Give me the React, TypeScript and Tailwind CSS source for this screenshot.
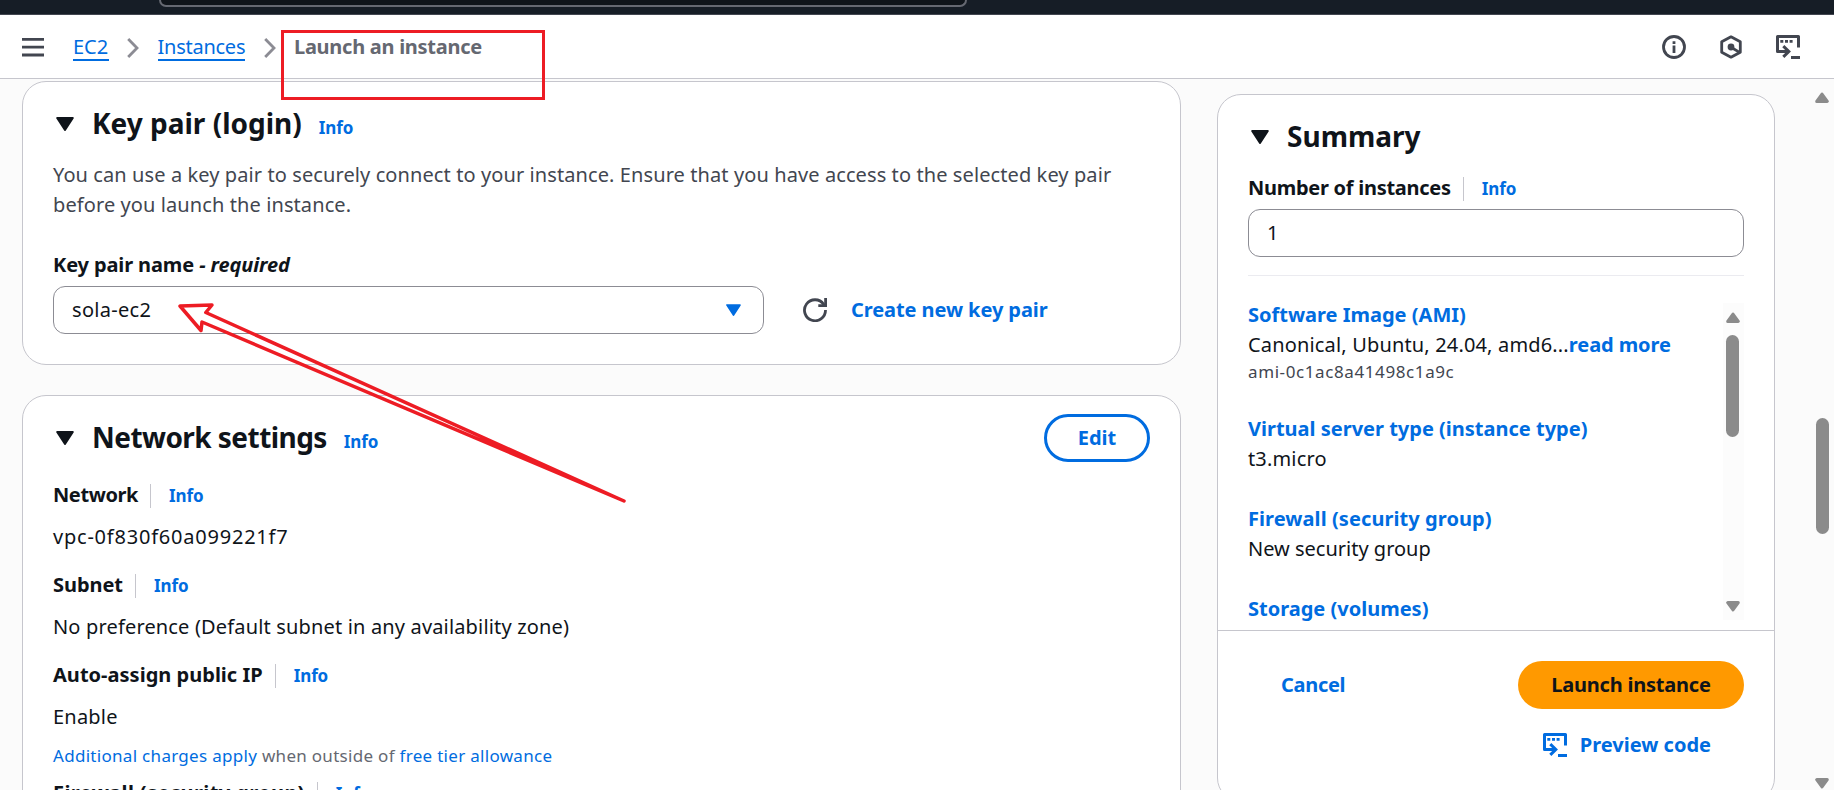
import type { ReactNode } from "react";

function Caret({ className }: { className: string }) {
  return (
    <svg viewBox="0 0 18 14" className={className} fill="currentColor" stroke="currentColor" strokeWidth="2" strokeLinejoin="round">
      <path d="M1.2 1H16.8L9 13Z" />
    </svg>
  );
}

function ScrollArrow({ down = false }: { down?: boolean }) {
  return (
    <svg viewBox="0 0 14 11" className={down ? "h-[11px] w-[14px] rotate-180 text-[#8b8b8b]" : "h-[11px] w-[14px] text-[#8b8b8b]"} fill="currentColor" stroke="currentColor" strokeWidth="3" strokeLinejoin="round">
      <path d="M7 2L12.3 9.4H1.7Z" />
    </svg>
  );
}

function Chevron() {
  return (
    <svg viewBox="0 0 12 20" className="h-5 w-3 shrink-0" fill="none" stroke="#8c8c94" strokeWidth="2.8">
      <path d="M1.2 1L10 10L1.2 19" />
    </svg>
  );
}

function ShellIcon({ className }: { className: string }) {
  return (
    <svg viewBox="0 0 24 24" className={className} fill="none" stroke="currentColor" strokeWidth="3">
      <path d="M22.5 12.5V1.5H1.5V16.5H12" strokeLinejoin="round" />
      <path d="M7.3 11.2L12.8 16.5L7.3 21.8" />
      <path d="M15 22.5H24" />
      <path d="M4.3 6.3H7.3M9 6.3H12M13.6 6.3H16.6" strokeWidth="2.8" />
    </svg>
  );
}

function InfoLink() {
  return <a className="text-[17px] leading-[32px] font-bold tracking-[-0.1px] text-[#006ce0]">Info</a>;
}

function Labelled({ children }: { children: ReactNode }) {
  return (
    <div className="flex h-[30px] items-start">
      {children}
      <span className="mt-1 mr-[18px] ml-3 h-6 w-px bg-[#c6c6cd]" />
      <InfoLink />
    </div>
  );
}

export default function App() {
  return (
    <div className="relative flex h-[790px] w-[1834px] flex-col overflow-hidden bg-[#fbfbfb] font-['Noto_Sans',sans-serif] text-[20px] leading-[30px] whitespace-nowrap text-[#0f141a]">
      <div className="flex h-[15px] shrink-0 items-start border-b border-[#424650] bg-[#161d26] pl-[159px]">
        <div className="h-[7px] w-[808px] rounded-b-[10px] border-2 border-t-0 border-[#656871] bg-[#0f141a]" />
      </div>

      <header className="flex h-16 shrink-0 items-start border-b border-[#c6c6cd] bg-white pt-4 pr-[34px] pl-[22px]">
        <svg viewBox="0 0 22 20" className="mt-[6px] h-5 w-[22px]" stroke="#424650" strokeWidth="2.8">
          <path d="M0 2.4H22M0 10.2H22M0 18H22" />
        </svg>
        <nav className="ml-[29px] flex items-start">
          <a className="h-[30px] w-9 border-b-2 border-[#006ce0] pt-px text-[#006ce0]">EC2</a>
          <span className="mt-[7px] ml-[18px] flex"><Chevron /></span>
          <a className="ml-[18.5px] h-[30px] w-[87.5px] border-b-2 border-[#006ce0] pt-px tracking-[-0.25px] text-[#006ce0]">Instances</a>
          <span className="mt-[7px] ml-[19px] flex"><Chevron /></span>
          <span className="ml-[18px] pt-px font-bold tracking-[-0.27px] text-[#656871]">Launch an instance</span>
        </nav>
        <div className="mt-1 ml-auto flex text-[#424650]">
          <svg viewBox="0 0 24 24" className="size-6" fill="none" stroke="currentColor" strokeWidth="2.8">
            <circle cx="12" cy="12" r="10.5" />
            <path d="M12 6.2V9M12 10.6V18" />
          </svg>
          <svg viewBox="0 0 22 24" className="ml-[34px] h-6 w-[22px]" fill="none" stroke="currentColor" strokeWidth="2.8" strokeLinejoin="round">
            <path d="M11 1.8L20.3 6.8V17.2L11 22.2L1.7 17.2V6.8Z" />
            <path d="M11 12.2L19.6 17.4" />
            <circle cx="11" cy="12" r="3.4" fill="currentColor" stroke="none" />
          </svg>
          <ShellIcon className="ml-[34px] size-6" />
        </div>
      </header>

      <main className="flex min-h-0 flex-1 items-start">
        <div className="ml-[22px] w-[1159px] shrink-0">
          <section className="mt-[2px] h-[284px] rounded-[24px] border border-[#c6c6cd] bg-white px-[30px]">
            <div className="flex h-[78px] items-start pt-[21px]">
              <Caret className="mt-[14px] ml-[3px] h-[14px] w-[18px]" />
              <h2 className="ml-[18px] text-[28px] leading-[40px] font-bold">Key pair (login)</h2>
              <span className="mt-[9px] ml-[17px] flex"><InfoLink /></span>
            </div>
            <p className="tracking-[0.095px] text-[#424650]">
              You can use a key pair to securely connect to your instance. Ensure that you have access to the selected key pair
              <br />
              before you launch the instance.
            </p>
            <div className="mt-[30px] font-bold tracking-[-0.12px]">
              Key pair name <em>- required</em>
            </div>
            <div className="mt-[6px] flex items-center">
              <div className="flex h-12 w-[711px] items-center justify-between rounded-xl border border-[#8c8c94] pr-[22px] pl-[18px]">
                <span className="tracking-[0.3px]">sola-ec2</span>
                <Caret className="h-3 w-[15px] text-[#006ce0]" />
              </div>
              <svg viewBox="0 0 24 24" className="ml-[39px] size-6" fill="none" stroke="#424650" strokeWidth="2.8">
                <path d="M22.5 12A10.5 10.5 0 1 1 20.6 6.2L21.6 7.6" />
                <path d="M15.3 7.6H22.6V0" />
              </svg>
              <a className="ml-6 font-bold tracking-[-0.08px] text-[#006ce0]">Create new key pair</a>
            </div>
          </section>

          <section className="mt-[30px] h-[460px] rounded-[24px] border border-[#c6c6cd] bg-white px-[30px]">
            <div className="flex h-[84px] items-start pt-[18px]">
              <Caret className="mt-[17px] ml-[3px] h-[14px] w-[18px]" />
              <h2 className="mt-[3px] ml-[18px] text-[28px] leading-[40px] font-bold tracking-[-0.55px]">Network settings</h2>
              <span className="mt-[12px] ml-[17px] flex"><InfoLink /></span>
              <button className="ml-auto h-12 w-[106px] rounded-full border-[3px] border-[#006ce0] font-bold text-[#006ce0]">Edit</button>
            </div>
            <Labelled><span className="font-bold tracking-[-0.4px]">Network</span></Labelled>
            <p className="mt-3 tracking-[0.78px]">vpc-0f830f60a099221f7</p>
            <div className="mt-[18px]"><Labelled><span className="font-bold tracking-[-0.05px]">Subnet</span></Labelled></div>
            <p className="mt-3 tracking-[0.16px]">No preference (Default subnet in any availability zone)</p>
            <div className="mt-[18px]"><Labelled><span className="font-bold tracking-[0.02px]">Auto-assign public IP</span></Labelled></div>
            <p className="mt-3 tracking-[0.2px]">Enable</p>
            <p className="mt-3 text-[17px] leading-6 tracking-[0.3px] text-[#656871]">
              <a className="text-[#006ce0]">Additional charges apply</a> when outside of <a className="text-[#006ce0]">free tier allowance</a>
            </p>
            <div className="mt-[10px]"><Labelled><span className="font-bold tracking-[0.4px]">Firewall (security group)</span></Labelled></div>
          </section>
        </div>

        <aside className="mt-[15px] ml-9 h-[708px] w-[558px] shrink-0 rounded-[24px] border border-[#c6c6cd] bg-white">
          <div className="px-[30px]">
            <div className="flex h-[78px] items-start pt-[21px]">
              <Caret className="mt-[14px] ml-[3px] h-[14px] w-[18px]" />
              <h2 className="ml-[18px] text-[28px] leading-[40px] font-bold">Summary</h2>
            </div>
            <Labelled><span className="font-bold tracking-[-0.27px]">Number of instances</span></Labelled>
            <div className="mt-[6px] flex h-12 items-center rounded-xl border border-[#8c8c94] pl-[18px]">1</div>
            <div className="mt-[18px] flex h-[345px] items-start border-t border-[#ebebf0]">
              <div className="min-w-0 flex-1 pt-6">
                <a className="block font-bold text-[#006ce0]">Software Image (AMI)</a>
                <p><span className="tracking-[0.16px]">Canonical, Ubuntu, 24.04, amd6...</span><a className="font-bold tracking-[-0.1px] text-[#006ce0]">read more</a></p>
                <p className="text-[17px] leading-6 tracking-[0.6px] text-[#424650]">ami-0c1ac8a41498c1a9c</p>
                <a className="mt-[30px] block font-bold text-[#006ce0]">Virtual server type (instance type)</a>
                <p className="tracking-[0.15px]">t3.micro</p>
                <a className="mt-[30px] block font-bold tracking-[0.08px] text-[#006ce0]">Firewall (security group)</a>
                <p>New security group</p>
                <a className="mt-[30px] block font-bold text-[#006ce0]">Storage (volumes)</a>
              </div>
              <div className="mt-[27px] flex h-[317px] w-[21px] flex-col items-center bg-[#fcfcfc] pt-[9px] pr-[2px] pb-2">
                <ScrollArrow />
                <div className="mt-3 h-[102px] w-[13px] rounded-full bg-[#8b8b8b]" />
                <span className="mt-auto flex"><ScrollArrow down /></span>
              </div>
            </div>
          </div>
          <div className="mt-[10px] border-t border-[#c6c6cd] pt-[30px] pr-[30px] pl-[63px]">
            <div className="flex items-center justify-between font-bold">
              <a className="tracking-[-0.3px] text-[#006ce0]">Cancel</a>
              <button className="h-12 w-[226px] rounded-full bg-[#ff9900] tracking-[-0.22px]">Launch instance</button>
            </div>
            <div className="mt-5 flex items-start justify-end pr-[33px] font-bold text-[#006ce0]">
              <ShellIcon className="mt-1 mr-[13px] size-6" />
              <span className="pt-px">Preview code</span>
            </div>
          </div>
        </aside>

        <div className="ml-auto flex h-[711px] w-[23px] flex-col items-center pt-[13px] pr-px pb-px">
          <ScrollArrow />
          <div className="mt-[315px] h-[116px] w-[13px] rounded-full bg-[#8b8b8b]" />
          <span className="mt-auto flex"><ScrollArrow down /></span>
        </div>
      </main>

      <div className="absolute top-[30px] left-[281px] h-[70px] w-[264px] border-[3px] border-[#ed1c24]" />
      <svg viewBox="0 0 460 210" className="absolute top-[300px] left-[169px] h-[210px] w-[460px]" fill="none" stroke="#ed1c24" strokeWidth="3.5">
        <path d="M11 6L43 5L36.8 12.5L455 201L33 22L32 30.5Z" strokeLinejoin="round" />
      </svg>
    </div>
  );
}
